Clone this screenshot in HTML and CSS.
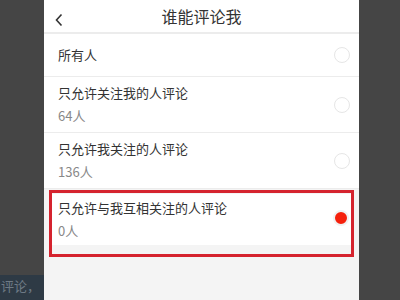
FILE: index.html
```html
<!DOCTYPE html>
<html lang="zh">
  <head>
    <meta charset="utf-8">
    <title>谁能评论我</title>
    <link rel="stylesheet" href="styles.css">
  </head>
  <body>
    <div class="side left">
      <div class="caption">评论，</div>
    </div>
    <div class="panel">
      <header class="topbar">
        <span class="back">
          <svg width="10" height="14" viewBox="0 0 10 14"><path d="M7.5 1.5 L2.5 7 L7.5 12.5" fill="none" stroke="#333" stroke-width="1.6"/></svg>
        </span>
        <h1>谁能评论我</h1>
      </header>
      <div class="row single">
        <div class="text"><div class="title">所有人</div></div>
        <span class="radio"></span>
      </div>
      <div class="row">
        <div class="text">
          <div class="title">只允许关注我的人评论</div>
          <div class="count">64人</div>
        </div>
        <span class="radio"></span>
      </div>
      <div class="row">
        <div class="text">
          <div class="title">只允许我关注的人评论</div>
          <div class="count">136人</div>
        </div>
        <span class="radio"></span>
      </div>
      <div class="highlight">
        <div class="row selected">
          <div class="text">
            <div class="title">只允许与我互相关注的人评论</div>
            <div class="count">0人</div>
          </div>
          <span class="radio on"></span>
        </div>
      </div>
    </div>
    <div class="side right"></div>
  </body>
</html>
```

FILE: styles.css
```css
html, body {
  margin: 0;
  height: 300px;
  overflow: hidden;
}

body {
  display: flex;
  background: #454545;
  font-family: "Noto Sans CJK SC", "Noto Sans", sans-serif;
  color: #333333;
}

.side {
  flex: none;
  height: 300px;
}

.side.left {
  width: 44px;
  display: flex;
  flex-direction: column;
  justify-content: flex-end;
}

.caption {
  height: 25px;
  background: #2e3a45;
  color: #6f7a85;
  font-size: 13px;
  line-height: 22px;
  white-space: nowrap;
  padding-left: 1px;
}

.side.right {
  width: 41px;
}

.panel {
  width: 315px;
  flex: none;
  height: 300px;
  background: #f4f4f4;
}

.topbar {
  height: 32px;
  background: #ffffff;
  border-bottom: 2px solid #ececec;
  position: relative;
  display: flex;
  align-items: center;
  justify-content: center;
}

.topbar h1 {
  margin: 0;
  font-size: 16px;
  font-weight: normal;
  color: #333333;
  line-height: 30px;
}

.back {
  position: absolute;
  left: 10px;
  top: 8px;
}

.row {
  background: #ffffff;
  display: flex;
  align-items: center;
  justify-content: space-between;
  height: 56px;
  padding: 0 9px 0 14px;
  border-bottom: 1px solid #ececec;
  box-sizing: border-box;
}

.row.single {
  height: 43px;
}

.title {
  font-size: 13px;
  line-height: 18px;
  color: #333333;
}

.count {
  font-size: 13px;
  line-height: 18px;
  margin-top: 5px;
  color: #888888;
}

.radio {
  width: 16px;
  height: 16px;
  border: 1px solid #e6e6e6;
  border-radius: 50%;
  box-sizing: border-box;
  background: #ffffff;
}

.radio.on {
  border: 2px solid #f1f1f1;
  background: #f5200c;
}

.highlight {
  margin: 1px 5px 0 5px;
  border: 3px solid #d5232e;
  height: 61px;
  background: #f4f4f4;
}

.row.selected {
  height: 51px;
  border-bottom: none;
  padding: 0 2px 0 6px;
  margin-top: 1px;
}

.row.selected .radio {
  margin-bottom: 4px;
}
```
